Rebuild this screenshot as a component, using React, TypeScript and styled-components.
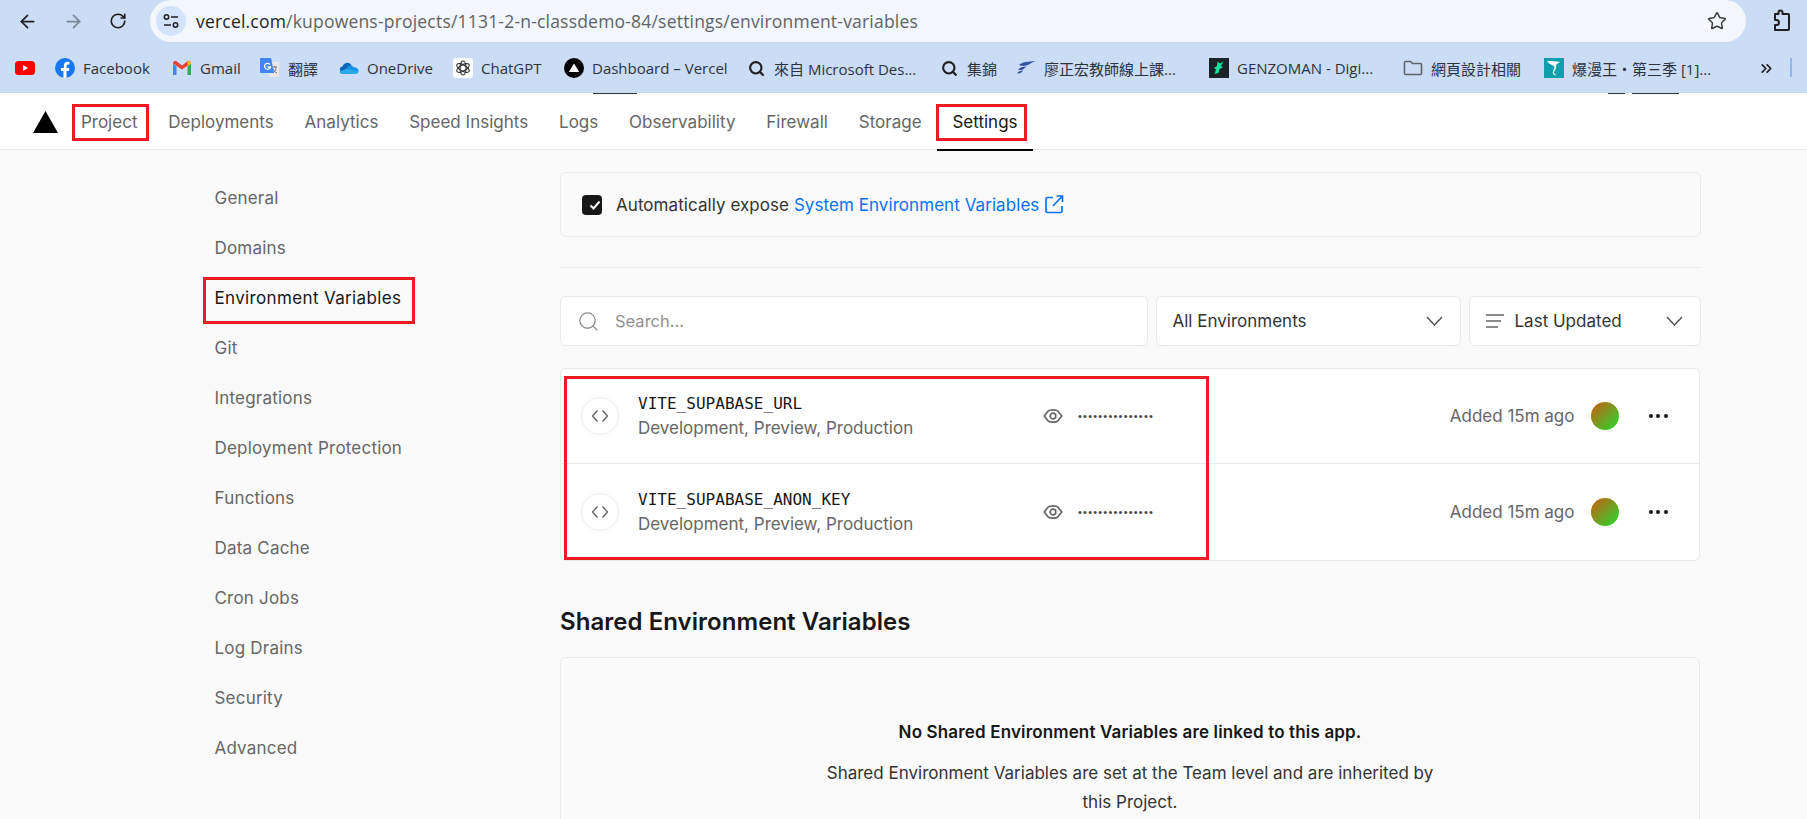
import React from "react";
import styled, { createGlobalStyle } from "styled-components";
import { ArrowLeft, ArrowRight, RotateCw, Star, ChevronsRight, Search } from "lucide-react";

const GlobalStyle = createGlobalStyle`
  html, body {
    margin: 0;
    padding: 0;
    height: 819px;
    overflow: hidden;
    background: #fafafa;
    font-family: Inter, "Noto Sans", sans-serif;
  }
  * { box-sizing: border-box; }
`;

const YoutubeIcon = () => (
  <svg width="20" height="20" viewBox="0 0 20 20">
    <rect x="0" y="3" width="20" height="14" rx="3.5" fill="#f00" />
    <path d="M8 7l5 3-5 3z" fill="#fff" />
  </svg>
);

const FacebookIcon = () => (
  <svg width="20" height="20" viewBox="0 0 20 20">
    <circle cx="10" cy="10" r="10" fill="#1877f2" />
    <path d="M13.9 12.9l.45-2.9h-2.8V8.1c0-.8.4-1.6 1.65-1.6h1.25V4c-1.5-.25-4.9-.7-5.5 3-.1.4-.1.8-.1 1.1V10H5.9v2.9h2.55v7h3.1v-7z" fill="#fff" />
  </svg>
);

const GmailIcon = () => (
  <svg width="20" height="20" viewBox="0 0 20 20">
    <path d="M1 5.5V17h3.5V8.5z" fill="#4285f4" />
    <path d="M15.500 8.500V17H19V5.500z" fill="#34a853" />
    <path d="M1 5.500C1 3 3.500 2 5 3.500L10 7.500V11.500L1 5.500z" fill="#ea4335" />
    <path d="M19 5.500C19 3 16.500 2 15 3.500L10 7.500V11.500L19 5.500z" fill="#ea4335" />
    <path d="M15.500 8.500L19 5.500C19 3.500 17 2.300 15.500 3.100z" fill="#fbbc04" />
  </svg>
);

const TranslateIcon = () => (
  <svg width="20" height="20" viewBox="0 0 20 20">
    <path d="M9 4h10v15H9z" fill="#e8e8e8" />
    <path d="M12 9h5M14.500 8v1M13 15c2-1.500 3-3.500 3-6M13 11c1 2 2 3 4 4" stroke="#777" strokeWidth="1" fill="none" />
    <path d="M1 0h10l3 15H1a1 1 0 0 1-1-1V1a1 1 0 0 1 1-1z" fill="#4285f4" />
    <path d="M10 6.500a3 3 0 1 0 .5 2.500H7.500" stroke="#fff" strokeWidth="1.300" fill="none" />
  </svg>
);

const OneDriveIcon = () => (
  <svg width="20" height="20" viewBox="0 0 20 20">
    <path d="M3 14C0 13 0 9 3.500 8.500 5 4 11 3.500 12.500 7.500L8 15z" fill="#0c64b8" />
    <path d="M7.500 10C9 6.500 13 6.500 14.500 9.300 18 9 20 12 19.500 13.500L10 13z" fill="#1490df" />
    <path d="M3.500 16C1.800 16 .8 15 .5 13.500L8 10.500l11.600 3c-.3 1.500-1.300 2.500-3 2.500z" fill="#28a8ea" />
  </svg>
);

const ChatGptIcon = () => (
  <svg width="20" height="20" viewBox="0 0 20 20">
    <rect width="20" height="20" rx="3" fill="#fff" />
    <g fill="none" stroke="#333" strokeWidth="1.200">
      <ellipse cx="10" cy="10" rx="3" ry="7" />
      <ellipse cx="10" cy="10" rx="3" ry="7" transform="rotate(60 10 10)" />
      <ellipse cx="10" cy="10" rx="3" ry="7" transform="rotate(120 10 10)" />
    </g>
  </svg>
);

const VercelIcon = () => (
  <svg width="20" height="20" viewBox="0 0 20 20">
    <circle cx="10" cy="10" r="10" fill="#000" />
    <path d="M10 5.500l5.200 8.500H4.800z" fill="#fff" />
  </svg>
);

const FeatherIcon = () => (
  <svg width="20" height="20" viewBox="0 0 20 20">
    <path d="M3 7c3-3 8-3.500 17-4-3 1-5 2-7 3.500C10 8 6 8.500 3 7z" fill="#3557a8" />
    <path d="M2 11.500c2-2 5-3 9-3-2 1-3 2-4 3-1 .5-3 .7-5 0z" fill="#2a4a9c" />
    <path d="M1 15.500c1-2 3-3 6-3-1 2-3 3.500-6 3z" fill="#3557a8" />
  </svg>
);

const GenzomanIcon = () => (
  <svg width="20" height="20" viewBox="0 0 20 20">
    <rect width="20" height="20" fill="#1a2327" />
    <path d="M8.500 3.500L8 8 5 10l2 1.500L5.500 16l4-1 1-4 3.500-1.500L12 8l2.500-4.500L11 5.500z" fill="#0ce39a" />
  </svg>
);

const FolderIcon = () => (
  <svg width="20" height="20" viewBox="0 0 20 20" fill="none">
    <path d="M1.500 4.500a1 1 0 0 1 1-1h5l2 2h8a1 1 0 0 1 1 1v9a1 1 0 0 1-1 1h-15a1 1 0 0 1-1-1z" stroke="#5f6368" strokeWidth="1.600" />
  </svg>
);

const ComicIcon = () => (
  <svg width="20" height="20" viewBox="0 0 20 20">
    <rect width="20" height="20" fill="#0e9fae" />
    <path d="M3 3c4 0 9 0 13 1-2 1-3 2-4 3 1 3-1 5-2 7 0 1 1 3 3 3-3 1-5-1-4-4 1-2 2-3 1-5C8 7 5 6 3 3z" fill="#fff" />
  </svg>
);

const TuneIcon = () => (
  <svg width="18" height="18" viewBox="0 0 18 18" fill="none" stroke="#1f1f1f" strokeWidth="1.500">
    <circle cx="4.500" cy="5" r="2.200" />
    <path d="M9 5h7M2 13h7" />
    <circle cx="13.500" cy="13" r="2.200" />
  </svg>
);

const ExtensionIcon = () => (
  <svg width="20" height="24" viewBox="0 0 20 24" fill="none" stroke="#1f1f1f" strokeWidth="2" strokeLinejoin="round">
    <path d="M3 5h3.500V3.500a2 2 0 0 1 4 0V5H16a1 1 0 0 1 1 1v14a1 1 0 0 1-1 1H3v-5h1.500a2.500 2.500 0 0 0 0-5H3z" />
  </svg>
);

const ExternalIcon = () => (
  <svg width="19" height="19" viewBox="0 0 19 19" fill="none" stroke="#0a72ef" strokeWidth="1.700">
    <path d="M8 2.500H2.500a1.500 1.500 0 0 0-1.500 1.500v12a1.500 1.500 0 0 0 1.500 1.500h13a1.500 1.500 0 0 0 1.500-1.500v-5" />
    <path d="M8 11L17 1.500M11.500 1h6v6" />
  </svg>
);

const CheckIcon = () => (
  <svg width="12" height="12" viewBox="0 0 12 12" fill="none" stroke="#fff" strokeWidth="2">
    <path d="M1.500 6.500l3 3 6-7" />
  </svg>
);

const EyeIcon = () => (
  <svg width="20" height="20" viewBox="0 0 20 20" fill="none" stroke="#666" strokeWidth="1.700">
    <path d="M1.200 10L5 5.200C7 3.400 13 3.400 15 5.200L18.800 10 15 14.800C13 16.600 7 16.600 5 14.800z" strokeLinejoin="round" />
    <circle cx="10" cy="10" r="2.800" />
  </svg>
);

const CodeIcon = () => (
  <svg width="18" height="16" viewBox="0 0 18 16" fill="none" stroke="#555" strokeWidth="1.200">
    <path d="M6.500 2.500L1.500 8l5 5.500M11.500 2.500l5 5.500-5 5.500" />
  </svg>
);

const LinesIcon = () => (
  <svg width="18" height="14" viewBox="0 0 18 14" fill="none" stroke="#666" strokeWidth="1.300">
    <path d="M0 1h18M0 7h15M0 13h12" />
  </svg>
);

const ChevronIcon = () => (
  <svg width="17" height="10" viewBox="0 0 17 10" fill="none" stroke="#555" strokeWidth="1.500">
    <path d="M1 1l7.500 8L16 1" />
  </svg>
);

const bookmarks: { label?: string; icon: React.ReactNode; width: number }[] = [
  { icon: <YoutubeIcon />, width: 40 },
  { label: "Facebook", icon: <FacebookIcon />, width: 117 },
  { label: "Gmail", icon: <GmailIcon />, width: 88 },
  { label: "翻譯", icon: <TranslateIcon />, width: 79 },
  { label: "OneDrive", icon: <OneDriveIcon />, width: 114 },
  { label: "ChatGPT", icon: <ChatGptIcon />, width: 111 },
  { label: "Dashboard – Vercel", icon: <VercelIcon />, width: 182 },
  { label: "來自 Microsoft Des...", icon: <Search size={17} strokeWidth={3} color="#1f1f1f" />, width: 193 },
  { label: "集錦", icon: <Search size={17} strokeWidth={3} color="#1f1f1f" />, width: 77 },
  { label: "廖正宏教師線上課...", icon: <FeatherIcon />, width: 193 },
  { label: "GENZOMAN - Digi...", icon: <GenzomanIcon />, width: 194 },
  { label: "網頁設計相關", icon: <FolderIcon />, width: 141 },
  { label: "爆漫王・第三季 [1]...", icon: <ComicIcon />, width: 218 },
];

const tabs = ["Project", "Deployments", "Analytics", "Speed Insights", "Logs", "Observability", "Firewall", "Storage", "Settings"];

const sideItems = [
  "General",
  "Domains",
  "Environment Variables",
  "Git",
  "Integrations",
  "Deployment Protection",
  "Functions",
  "Data Cache",
  "Cron Jobs",
  "Log Drains",
  "Security",
  "Advanced",
];

const variables = ["VITE_SUPABASE_URL", "VITE_SUPABASE_ANON_KEY"];

const App = () => {
  return (
    <Root>
      <GlobalStyle />
      <Chrome>
        <UrlRow>
          <NavButtons>
            <ArrowLeft size={21} color="#1f1f1f" strokeWidth={2} />
            <ArrowRight size={21} color="#7c8694" strokeWidth={2} />
            <RotateCw size={18} color="#1f1f1f" strokeWidth={2.2} />
          </NavButtons>
          <Omnibox>
            <SiteInfo>
              <TuneIcon />
            </SiteInfo>
            <UrlText>
              vercel.com<span>/kupowens-projects/1131-2-n-classdemo-84/settings/environment-variables</span>
            </UrlText>
            <Star size={20} color="#3c4043" strokeWidth={1.8} />
          </Omnibox>
          <ExtensionSlot>
            <ExtensionIcon />
          </ExtensionSlot>
        </UrlRow>
        <BookmarkRow>
          {bookmarks.map((b, i) => (
            <Bookmark key={i} $width={b.width}>
              <BookmarkIcon>{b.icon}</BookmarkIcon>
              {b.label && <span>{b.label}</span>}
            </Bookmark>
          ))}
          <MoreSlot>
            <ChevronsRight size={17} color="#1f1f1f" strokeWidth={2.4} />
          </MoreSlot>
          <BarDivider />
        </BookmarkRow>
      </Chrome>

      <TopNav>
        <Remnant $left={593} $width={44} />
        <Remnant $left={1608} $width={17} />
        <Remnant $left={1632} $width={47} />
        <Logo viewBox="0 0 25 22" width="25" height="22">
          <path d="M12.500 0L25 22H0z" fill="#000" />
        </Logo>
        <Tabs>
          {tabs.map((t) => (
            <Tab key={t} $active={t === "Settings"}>
              {t}
            </Tab>
          ))}
        </Tabs>
      </TopNav>

      <Body>
        <Sidebar>
          {sideItems.map((s) => (
            <SideItem key={s} $active={s === "Environment Variables"}>
              {s}
            </SideItem>
          ))}
        </Sidebar>

        <Content>
          <ExposeCard>
            <Checkbox>
              <CheckIcon />
            </Checkbox>
            <ExposeText>
              Automatically expose <a>System Environment Variables</a>
            </ExposeText>
            <ExternalIcon />
          </ExposeCard>

          <Divider />

          <Filters>
            <SearchBox>
              <Search size={23} color="#8f8f8f" strokeWidth={1.4} />
              <span>Search...</span>
            </SearchBox>
            <SelectBox $width={305}>
              <SelectLabel>All Environments</SelectLabel>
              <ChevronIcon />
            </SelectBox>
            <SelectBox $width={232}>
              <SelectLabel>
                <LinesIcon />
                Last Updated
              </SelectLabel>
              <ChevronIcon />
            </SelectBox>
          </Filters>

          <VarList>
            {variables.map((v) => (
              <VarRow key={v}>
                <CodeBadge>
                  <CodeIcon />
                </CodeBadge>
                <VarInfo>
                  <VarName>{v}</VarName>
                  <VarEnvs>Development, Preview, Production</VarEnvs>
                </VarInfo>
                <EyeIcon />
                <Masked>•••••••••••••••</Masked>
                <Added>Added 15m ago</Added>
                <Avatar />
                <MoreDots>
                  <i />
                  <i />
                  <i />
                </MoreDots>
              </VarRow>
            ))}
          </VarList>

          <SharedTitle>Shared Environment Variables</SharedTitle>

          <SharedCard>
            <SharedHead>No Shared Environment Variables are linked to this app.</SharedHead>
            <SharedText>Shared Environment Variables are set at the Team level and are inherited by this Project.</SharedText>
          </SharedCard>
        </Content>
      </Body>

      <RedBox $left={72} $top={104} $width={77} $height={37} />
      <RedBox $left={936} $top={104} $width={91} $height={37} />
      <RedBox $left={203} $top={277} $width={212} $height={47} />
      <RedBox $left={564} $top={376} $width={645} $height={184} />
    </Root>
  );
};

const Root = styled.div`
  position: relative;
  width: 1807px;
  height: 819px;
  overflow: hidden;
  background: #fafafa;
`;

const Chrome = styled.div`
  background: #cbdcf5;
  height: 93px;
`;

const UrlRow = styled.div`
  display: flex;
  align-items: center;
  height: 42px;
`;

const NavButtons = styled.div`
  display: flex;
  align-items: center;
  gap: 25px;
  width: 150px;
  padding-left: 17px;
`;

const Omnibox = styled.div`
  display: flex;
  align-items: center;
  width: 1596px;
  height: 42px;
  padding: 0 19px 0 6px;
  background: #f3f6fc;
  border-radius: 21px;
`;

const SiteInfo = styled.div`
  display: flex;
  align-items: center;
  justify-content: center;
  width: 30px;
  height: 30px;
  border-radius: 50%;
  background: #d3e3fd;
`;

const UrlText = styled.div`
  flex: 1;
  margin-left: 10px;
  font-family: "Open Sans", "Noto Sans", sans-serif;
  font-size: 17.500px;
  color: #1f1f1f;
  letter-spacing: 0.2px;

  span {
    color: #5f6368;
  }
`;

const ExtensionSlot = styled.div`
  display: flex;
  justify-content: center;
  flex: 1;
  padding-left: 10px;
`;

const BookmarkRow = styled.div`
  position: relative;
  display: flex;
  align-items: center;
  height: 51px;
  padding: 1px 0 0 15px;
`;

const Bookmark = styled.div<{ $width: number }>`
  display: flex;
  align-items: center;
  gap: 8px;
  flex: 0 0 ${(p) => p.$width}px;
  font-family: "Open Sans", "Noto Sans CJK TC", sans-serif;
  font-size: 15px;
  white-space: nowrap;
  color: #2b3340;
`;

const BookmarkIcon = styled.div`
  display: flex;
  align-items: center;
  justify-content: center;
  width: 20px;
  height: 20px;
`;

const MoreSlot = styled.div`
  display: flex;
  margin-left: -4px;
`;

const BarDivider = styled.div`
  position: absolute;
  left: 1790px;
  top: 16px;
  width: 2px;
  height: 19px;
  background: #8fb4ee;
`;

const TopNav = styled.div`
  position: relative;
  display: flex;
  align-items: center;
  height: 57px;
  padding-left: 33px;
  background: #fff;
  border-bottom: 1px solid #eaeaea;
`;

const Remnant = styled.div<{ $left: number; $width: number }>`
  position: absolute;
  top: 0;
  left: ${(p) => p.$left}px;
  width: ${(p) => p.$width}px;
  height: 1px;
  background: #333;
`;

const Logo = styled.svg`
  flex: none;
  margin-top: 1px;
`;

const Tabs = styled.div`
  display: flex;
  align-items: stretch;
  align-self: stretch;
  margin: 0 0 -2px 7.500px;
`;

const Tab = styled.div<{ $active: boolean }>`
  display: flex;
  align-items: center;
  padding: 0 15.400px;
  font-size: 17px;
  letter-spacing: 0.015px;
  color: ${(p) => (p.$active ? "#171717" : "#666")};
  box-shadow: ${(p) => (p.$active ? "inset 0 -2px 0 #000" : "none")};
`;

const Body = styled.div`
  display: flex;
`;

const Sidebar = styled.nav`
  flex: 0 0 560px;
  padding: 23px 0 0 214.500px;
`;

const SideItem = styled.div<{ $active: boolean }>`
  display: flex;
  align-items: center;
  height: 50px;
  font-size: 17px;
  letter-spacing: ${(p) => (p.$active ? "0.35px" : "0.2px")};
  color: ${(p) => (p.$active ? "#171717" : "#666")};
`;

const Content = styled.main`
  flex: 0 0 1141px;
  padding-top: 22px;
`;

const ExposeCard = styled.div`
  display: flex;
  align-items: center;
  height: 65px;
  padding-left: 21px;
  border: 1px solid #eaeaea;
  border-radius: 6px;
  background: #fafafa;

  svg:last-child {
    margin-left: 6px;
  }
`;

const Checkbox = styled.div`
  display: flex;
  align-items: center;
  justify-content: center;
  width: 20px;
  height: 20px;
  border-radius: 4px;
  background: #171717;
`;

const ExposeText = styled.div`
  margin-left: 14px;
  font-size: 17px;
  letter-spacing: 0.06px;
  color: #333;

  a {
    color: #0a72ef;
  }
`;

const Divider = styled.div`
  height: 1px;
  margin: 30px 0 28px;
  background: #eaeaea;
`;

const Filters = styled.div`
  display: flex;
  gap: 8px;
`;

const SearchBox = styled.div`
  display: flex;
  align-items: center;
  flex: 1;
  gap: 15px;
  height: 50px;
  padding-left: 16px;
  background: #fff;
  border: 1px solid #eaeaea;
  border-radius: 6px;
  font-size: 16.500px;
  color: #8f8f8f;
`;

const SelectBox = styled.div<{ $width: number }>`
  display: flex;
  align-items: center;
  justify-content: space-between;
  flex: 0 0 ${(p) => p.$width}px;
  height: 50px;
  padding: 0 17px 0 15.500px;
  background: #fff;
  border: 1px solid #eaeaea;
  border-radius: 6px;
`;

const SelectLabel = styled.div`
  display: flex;
  align-items: center;
  gap: 11px;
  font-size: 17px;
  color: #333;
`;

const VarList = styled.div`
  margin-top: 22px;
  background: #fff;
  border: 1px solid #eaeaea;
  border-radius: 6px;
  width: 1140px;
`;

const VarRow = styled.div`
  display: flex;
  align-items: center;
  height: 94px;
  padding: 0 31.500px 0 20px;

  & + & {
    height: 97px;
    border-top: 1px solid #eaeaea;
  }
`;

const CodeBadge = styled.div`
  display: flex;
  align-items: center;
  justify-content: center;
  flex: none;
  width: 38px;
  height: 38px;
  border: 1px solid #eaeaea;
  border-radius: 50%;
  background: #fff;
`;

const VarInfo = styled.div`
  flex: 0 0 405px;
  margin-left: 19px;
`;

const VarName = styled.div`
  font-family: "DejaVu Sans Mono", "Liberation Mono", monospace;
  font-size: 16px;
  line-height: 24px;
  letter-spacing: 0.02px;
  color: #171717;
`;

const VarEnvs = styled.div`
  font-size: 17px;
  line-height: 25px;
  color: #666;
`;

const Masked = styled.div`
  margin-left: 15px;
  margin-bottom: 1px;
  font-family: "Liberation Sans", sans-serif;
  font-size: 11px;
  letter-spacing: 1.220px;
  color: #444;
`;

const Added = styled.div`
  margin-left: auto;
  font-size: 17px;
  color: #666;
`;

const Avatar = styled.div`
  flex: none;
  width: 28px;
  height: 28px;
  margin-left: 16px;
  border-radius: 50%;
  background: linear-gradient(135deg, #cc5a10, #22de2e);
`;

const MoreDots = styled.div`
  display: flex;
  gap: 3.500px;
  margin-left: 30px;

  i {
    width: 4px;
    height: 4px;
    border-radius: 50%;
    background: #171717;
  }
`;

const SharedTitle = styled.h2`
  margin: 45px 0 19px;
  font-size: 24px;
  line-height: 32px;
  font-weight: 600;
  letter-spacing: 0.05px;
  color: #171717;
`;

const SharedCard = styled.div`
  width: 1140px;
  height: 240px;
  padding-top: 62px;
  text-align: center;
  border: 1px solid #eaeaea;
  border-radius: 6px;
  background: #fafafa;
`;

const SharedHead = styled.div`
  font-size: 17px;
  line-height: 24px;
  font-weight: 600;
  letter-spacing: 0.15px;
  color: #171717;
`;

const SharedText = styled.div`
  width: 630px;
  margin: 15px auto 0;
  font-size: 17px;
  line-height: 29px;
  color: #333;
`;

const RedBox = styled.div<{ $left: number; $top: number; $width: number; $height: number }>`
  position: absolute;
  left: ${(p) => p.$left}px;
  top: ${(p) => p.$top}px;
  width: ${(p) => p.$width}px;
  height: ${(p) => p.$height}px;
  border: 3px solid #ed1c24;
`;

export default App;
